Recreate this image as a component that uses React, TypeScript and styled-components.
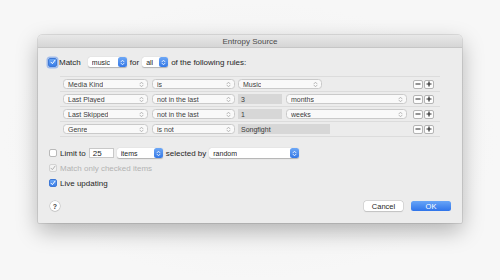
import React from "react";
import styled, { createGlobalStyle, css } from "styled-components";

const GlobalStyle = createGlobalStyle`
  html, body { margin: 0; padding: 0; }
  body {
    background: #f5f5f5;
    font-family: "Liberation Sans", Arial, sans-serif;
    -webkit-font-smoothing: antialiased;
  }
`;

const Page = styled.div`
  width: 500px;
  height: 280px;
  box-sizing: border-box;
  padding: 35px 0 0 38px;
  background: radial-gradient(ellipse at 50% 50%, #f0f0f0 0%, #f7f7f7 70%);
  overflow: hidden;
`;

const Window = styled.div`
  width: 424px;
  height: 188px;
  background: #ececec;
  border-radius: 4px 4px 1px 1px;
  box-shadow: 0 0 0 0.5px rgba(0, 0, 0, 0.18), 0 8px 22px rgba(0, 0, 0, 0.28);
  display: flex;
  flex-direction: column;
  overflow: hidden;
`;

const TitleBar = styled.div`
  height: 12px;
  line-height: 13px;
  text-align: center;
  font-size: 8px;
  color: #4b4b4b;
  background: linear-gradient(#e8e8e8, #d6d6d6);
  border-bottom: 1px solid #c6c6c6;
`;

const Body = styled.div`
  flex: 1;
  display: flex;
  flex-direction: column;
  padding: 9px 11px 12px 10px;
`;

const Line = styled.div<{ $mt?: number; $ml?: number }>`
  display: flex;
  align-items: center;
  height: 10px;
  gap: 3px;
  margin-top: ${(p) => p.$mt ?? 0}px;
  margin-left: ${(p) => p.$ml ?? 0}px;
`;

const Label = styled.span<{ $disabled?: boolean; $ml?: number }>`
  font-size: 8px;
  color: ${(p) => (p.$disabled ? "#b3b3b3" : "#262626")};
  white-space: nowrap;
  margin-left: ${(p) => p.$ml ?? 0}px;
`;

const Box = styled.span<{ $checked?: boolean; $disabled?: boolean; $size?: number; $focus?: boolean }>`
  width: ${(p) => p.$size ?? 8}px;
  height: ${(p) => p.$size ?? 8}px;
  box-sizing: border-box;
  border-radius: 2px;
  display: inline-flex;
  align-items: center;
  justify-content: center;
  flex: none;
  ${(p) =>
    p.$checked && !p.$disabled
      ? css`
          background: linear-gradient(#6aa6f6, #3a7ee8);
          border: 1px solid #3d78d6;
        `
      : p.$disabled
      ? css`
          background: #f3f3f3;
          border: 1px solid #d3d3d3;
        `
      : css`
          background: #ffffff;
          border: 1px solid #b9b9b9;
        `}
  ${(p) =>
    p.$focus &&
    css`
      box-shadow: 0 0 0 1.5px rgba(100, 150, 235, 0.55);
    `}
`;

const Check = ({ color }: { color: string }) => (
  <svg width="6" height="6" viewBox="0 0 6 6">
    <path d="M1 3.2 L2.4 4.7 L5 1.2" fill="none" stroke={color} strokeWidth="1" strokeLinecap="round" strokeLinejoin="round" />
  </svg>
);

const CheckBox = ({ checked, disabled, size, focus }: { checked?: boolean; disabled?: boolean; size?: number; focus?: boolean }) => (
  <Box $checked={checked} $disabled={disabled} $size={size} $focus={focus}>
    {checked && <Check color={disabled ? "#b0b0b0" : "#ffffff"} />}
  </Box>
);

const PopupBox = styled.span<{ $w: number; $blue?: boolean }>`
  width: ${(p) => p.$w}px;
  height: 10px;
  box-sizing: border-box;
  flex: none;
  display: inline-flex;
  align-items: center;
  justify-content: space-between;
  background: #ffffff;
  font-size: 7px;
  ${(p) =>
    p.$blue
      ? css`
          border-radius: 2.5px;
          color: #262626;
          box-shadow: 0 0.5px 1px rgba(0, 0, 0, 0.25);
          padding-left: 4px;
        `
      : css`
          border-radius: 3.5px;
          color: #3c3c3c;
          border: 1px solid #cacaca;
          background: #f9f9f9;
          padding-left: 4px;
          padding-right: 3px;
        `}
`;

const PopupText = styled.span`
  white-space: nowrap;
  overflow: hidden;
`;

const BlueStepper = styled.span`
  width: 9px;
  height: 10px;
  border-radius: 2.5px;
  background: linear-gradient(#6ea8f6, #3478e6);
  display: inline-flex;
  align-items: center;
  justify-content: center;
  flex: none;
`;

const Arrows = ({ color }: { color: string }) => (
  <svg width="5" height="7" viewBox="0 0 5 7">
    <path d="M1 2.8 L2.5 1.2 L4 2.8 M1 4.2 L2.5 5.8 L4 4.2" fill="none" stroke={color} strokeWidth="0.8" strokeLinecap="round" strokeLinejoin="round" />
  </svg>
);

const Popup = ({ w, text, blue }: { w: number; text: string; blue?: boolean }) => (
  <PopupBox $w={w} $blue={blue}>
    <PopupText>{text}</PopupText>
    {blue ? (
      <BlueStepper>
        <Arrows color="#ffffff" />
      </BlueStepper>
    ) : (
      <Arrows color="#a8a8a8" />
    )}
  </PopupBox>
);

const Field = styled.span<{ $w: number; $white?: boolean }>`
  width: ${(p) => p.$w}px;
  height: 10px;
  box-sizing: border-box;
  flex: none;
  display: inline-flex;
  align-items: center;
  padding-left: 3px;
  font-size: 7px;
  color: ${(p) => (p.$white ? "#262626" : "#3a3a3a")};
  background: ${(p) => (p.$white ? "#ffffff" : "#d7d7d7")};
  ${(p) =>
    p.$white &&
    css`
      border: 1px solid #c8c8c8;
      font-size: 8px;
    `}
`;

const Rules = styled.div`
  margin: 9px 0 0 12px;
  width: 380px;
  border-bottom: 1px solid #dcdcdc;
`;

const RuleRow = styled.div`
  height: 14px;
  border-top: 1px solid #dcdcdc;
  display: flex;
  align-items: center;
  padding: 0 6px 0 3px;
`;

const Gap = styled.span<{ $w: number }>`
  width: ${(p) => p.$w}px;
  flex: none;
`;

const StepButtons = styled.span`
  margin-left: auto;
  display: inline-flex;
  gap: 1px;
`;

const SmallBtn = styled.span`
  width: 10px;
  height: 9px;
  box-sizing: border-box;
  border: 1px solid #b4b4b4;
  border-radius: 2px;
  background: #fdfdfd;
  display: inline-flex;
  align-items: center;
  justify-content: center;
`;

const Minus = () => (
  <SmallBtn>
    <svg width="6" height="6" viewBox="0 0 6 6">
      <path d="M0.5 3 H5.5" stroke="#2a2a2a" strokeWidth="1.2" />
    </svg>
  </SmallBtn>
);

const Plus = () => (
  <SmallBtn>
    <svg width="6" height="6" viewBox="0 0 6 6">
      <path d="M0.5 3 H5.5 M3 0.5 V5.5" stroke="#2a2a2a" strokeWidth="1.2" />
    </svg>
  </SmallBtn>
);

const Footer = styled.div`
  margin-top: auto;
  display: flex;
  align-items: center;
  height: 10px;
`;

const Help = styled.span`
  width: 10px;
  height: 10px;
  margin-left: 2px;
  border-radius: 50%;
  background: #ffffff;
  box-shadow: 0 0 0 0.5px #bdbdbd, 0 0.5px 1px rgba(0, 0, 0, 0.2);
  display: inline-flex;
  align-items: center;
  justify-content: center;
  font-size: 7px;
  font-weight: bold;
  color: #444;
`;

const PushButton = styled.span<{ $primary?: boolean }>`
  width: 40px;
  height: 10px;
  border-radius: 2.5px;
  display: inline-flex;
  align-items: center;
  justify-content: center;
  font-size: 7.5px;
  ${(p) =>
    p.$primary
      ? css`
          background: linear-gradient(#68a5f7, #2f74ea);
          color: #ffffff;
          margin-left: 8px;
        `
      : css`
          background: #ffffff;
          color: #262626;
          box-shadow: 0 0 0 0.5px #c4c4c4, 0 0.5px 1px rgba(0, 0, 0, 0.18);
          margin-left: auto;
          width: 39px;
        `}
`;

type Rule = { a: string; b: string; kind: "popup" | "num" | "text"; value: string; unit?: string };

const rules: Rule[] = [
  { a: "Media Kind", b: "is", kind: "popup", value: "Music" },
  { a: "Last Played", b: "not in the last", kind: "num", value: "3", unit: "months" },
  { a: "Last Skipped", b: "not in the last", kind: "num", value: "1", unit: "weeks" },
  { a: "Genre", b: "is not", kind: "text", value: "Songfight" },
];

export default function App() {
  return (
    <>
      <GlobalStyle />
      <Page>
        <Window>
          <TitleBar>Entropy Source</TitleBar>
          <Body>
            <Line>
              <CheckBox checked size={9} focus />
              <Label $ml={-1}>Match</Label>
              <Gap $w={1} />
              <Popup w={39} text="music" blue />
              <Label>for</Label>
              <Popup w={26} text="all" blue />
              <Label>of the following rules:</Label>
            </Line>
            <Rules>
              {rules.map((r) => (
                <RuleRow key={r.a}>
                  <Popup w={85} text={r.a} />
                  <Gap $w={4} />
                  <Popup w={83} text={r.b} />
                  <Gap $w={3} />
                  {r.kind === "popup" && <Popup w={84} text={r.value} />}
                  {r.kind === "num" && (
                    <>
                      <Field $w={44}>{r.value}</Field>
                      <Gap $w={4} />
                      <Popup w={121} text={r.unit ?? ""} />
                    </>
                  )}
                  {r.kind === "text" && <Field $w={92}>{r.value}</Field>}
                  <StepButtons>
                    <Minus />
                    <Plus />
                  </StepButtons>
                </RuleRow>
              ))}
            </Rules>
            <Line $mt={11} $ml={1}>
              <CheckBox />
              <Label>Limit to</Label>
              <Field $w={25} $white>
                25
              </Field>
              <Popup w={46} text="items" blue />
              <Label>selected by</Label>
              <Popup w={90} text="random" blue />
            </Line>
            <Line $mt={5} $ml={1}>
              <CheckBox checked disabled />
              <Label $disabled>Match only checked items</Label>
            </Line>
            <Line $mt={5} $ml={1}>
              <CheckBox checked />
              <Label>Live updating</Label>
            </Line>
            <Footer>
              <Help>?</Help>
              <PushButton>Cancel</PushButton>
              <PushButton $primary>OK</PushButton>
            </Footer>
          </Body>
        </Window>
      </Page>
    </>
  );
}
